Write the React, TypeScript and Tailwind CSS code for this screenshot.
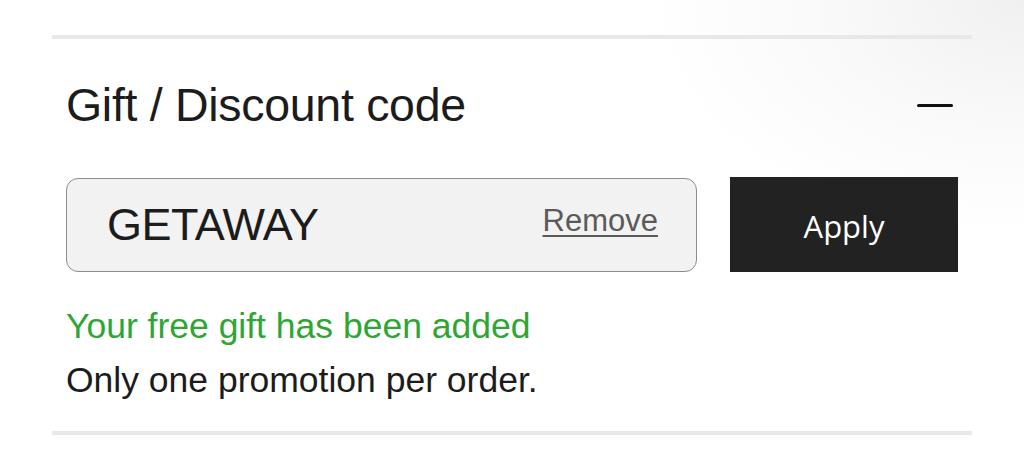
export default function App() {
  return (
    <div className="relative h-[449px] w-full overflow-hidden bg-white font-['Liberation_Sans',Arial,sans-serif] text-[#1c1c1c]">
      <div className="pointer-events-none absolute right-0 top-0 h-[240px] w-[380px] bg-[radial-gradient(ellipse_at_top_right,#f0f0f0_0%,#f9f9f9_35%,rgba(255,255,255,0)_70%)]" />
      <section className="relative ml-[52px] mt-[35px] w-[920px] border-t-4 border-[#e6e9ec]">
        <div className="flex h-[132px] items-center justify-between pl-[14px] pr-[19px]">
          <h2 className="text-[46.5px] leading-none tracking-[-0.3px]">Gift / Discount code</h2>
          <span className="block h-[3px] w-[36px] rounded-full bg-[#111]" />
        </div>

        <div className="mt-[6px] flex h-[95px] items-center gap-[33px] px-[14px]">
          <div className="flex h-[94px] w-[631px] items-center justify-between rounded-[12px] border-[1.5px] border-[#8c8c8c] bg-[#f2f2f2] pl-[40px] pr-[38px]">
            <span className="text-[45px] leading-none tracking-[-0.5px]">GETAWAY</span>
            <button className="-mt-[8px] text-[31px] leading-none text-[#5a5a5a] underline decoration-[2px] underline-offset-[4px]">
              Remove
            </button>
          </div>
          <button className="flex h-[95px] w-[228px] items-center justify-center bg-[#222] pt-[4px] font-['Open_Sans',sans-serif] text-[31px] text-white">
            Apply
          </button>
        </div>

        <div className="mt-[27px] px-[14px] text-[35.5px] leading-[54px]">
          <p className="text-[#2fa534]">Your free gift has been added</p>
          <p>Only one promotion per order.</p>
        </div>

        <div className="mt-[24px] h-[4px] w-full bg-[#e6e9ec]" />
      </section>
    </div>
  )
}
